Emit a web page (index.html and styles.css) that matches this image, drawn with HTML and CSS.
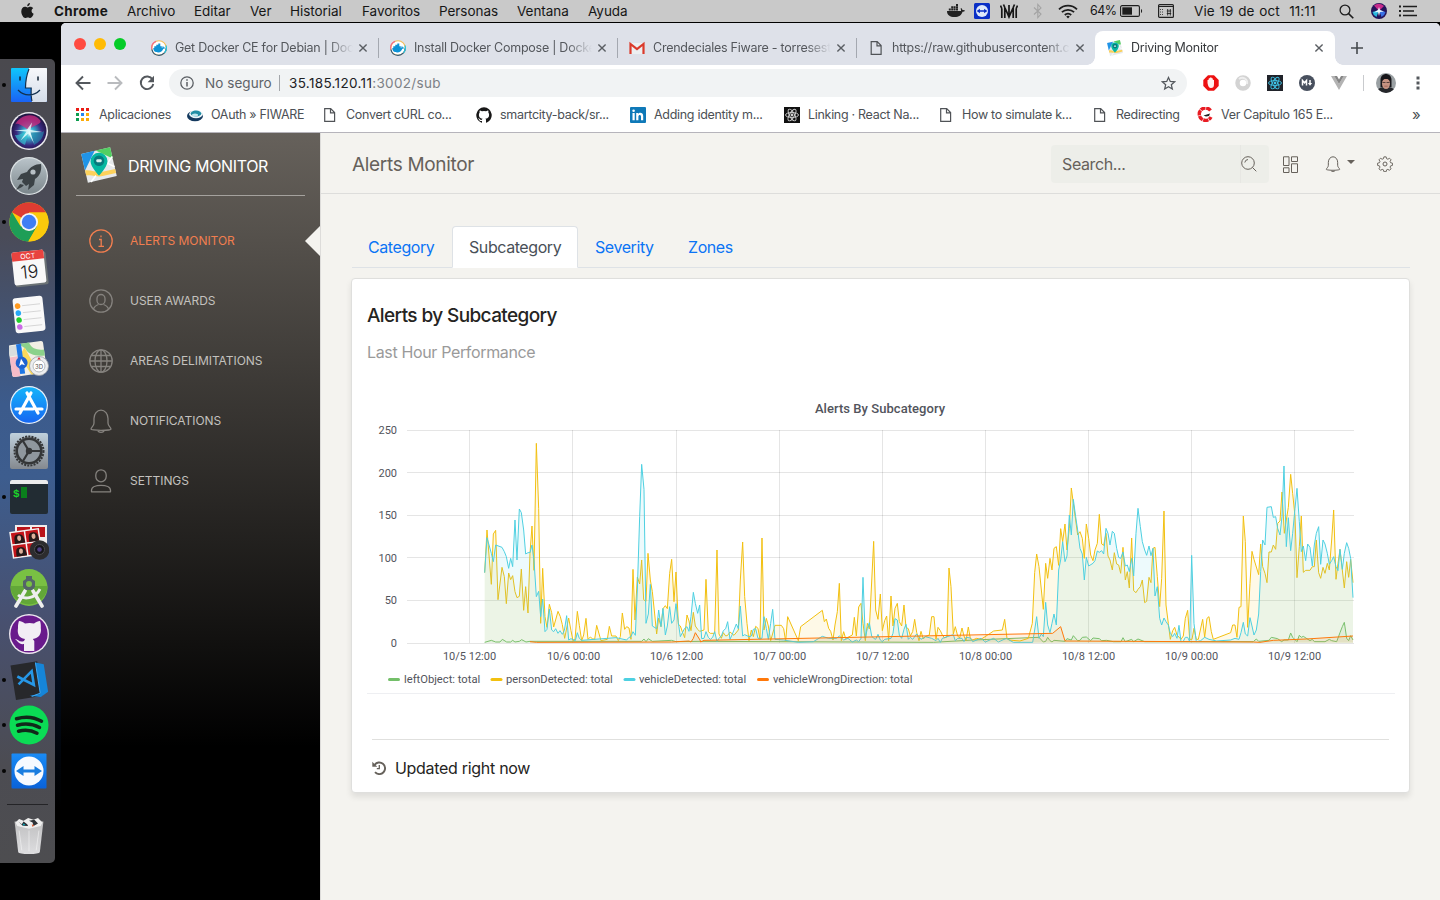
FILE: index.html
```html
<!DOCTYPE html>
<html lang="es">
<head>
<meta charset="utf-8">
<title>Driving Monitor</title>
<link rel="stylesheet" href="styles.css">
</head>
<body>
<svg class="defs" width="0" height="0" aria-hidden="true">
  <defs>
    <linearGradient id="gFinder" x2="0" y2="1"><stop offset="0" stop-color="#0fc6fb"/><stop offset="1" stop-color="#1a62f5"/></linearGradient>
    <linearGradient id="gWhite" x2="0" y2="1"><stop offset="0" stop-color="#f7f8fb"/><stop offset="1" stop-color="#d5dde9"/></linearGradient>
    <linearGradient id="gSilver" x2="0" y2="1"><stop offset="0" stop-color="#b9c3c9"/><stop offset="1" stop-color="#7c878c"/></linearGradient>
    <linearGradient id="gStore" x2="0" y2="1"><stop offset="0" stop-color="#15b4fa"/><stop offset="1" stop-color="#1667f2"/></linearGradient>
    <linearGradient id="gTeam" x2="0" y2="1"><stop offset="0" stop-color="#1a8bf5"/><stop offset="1" stop-color="#0a62d8"/></linearGradient>
    <linearGradient id="gPrefs" x2="0" y2="1"><stop offset="0" stop-color="#bfd0dc"/><stop offset="1" stop-color="#84898f"/></linearGradient>
    <linearGradient id="gTrash" x2="0" y2="1"><stop offset="0" stop-color="#c9c9ca"/><stop offset="1" stop-color="#e8e8ea"/></linearGradient>
    <radialGradient id="gSiri" cx=".5" cy=".55" r=".6"><stop offset="0" stop-color="#eafcff"/><stop offset=".25" stop-color="#36b3cf"/><stop offset=".6" stop-color="#3a2a80"/><stop offset="1" stop-color="#140c28"/></radialGradient>
    <symbol id="docker" viewBox="0 0 16 16">
      <circle cx="8" cy="8" r="7.3" fill="#fff" stroke="#f6bd55" stroke-width="1.1"/>
      <path d="M.9 9.500A7.300 7.300 0 0 1 5 1.400" fill="none" stroke="#f26d86" stroke-width="1.200"/>
      <path d="M15.300 8A7.300 7.300 0 0 1 8 15.300 7.300 7.300 0 0 1 .9 9.500" fill="none" stroke="#27577f" stroke-width="1.200"/>
      <path d="M15 5.500a7.300 7.300 0 0 1-1.500 7.300" fill="none" stroke="#27c5e0" stroke-width="1.200"/>
      <path d="M2.300 8h1V6.300h2V4.700h2V3.600h2v2.700h1.500V8c.8 0 1-.9.7-1.900 1 .3 1.300 1 1.300 1.500.6-.1 1.100 0 1.500.2-.4.8-1.100 1-2 1-.8 2.500-2.500 3.600-5 3.600-3 0-5-1.200-5-4.400z" fill="#0d93d6"/>
    </symbol>
    <symbol id="page" viewBox="0 0 12 16"><path d="M1.200 1.700h6l3.900 3.900v8.700H1.200zM7 1.700v4.100h4.100" fill="none" stroke="#505357" stroke-width="1.200"/></symbol>
    <symbol id="cross" viewBox="0 0 10 10"><path d="M1.400 1.400l7.200 7.200M8.600 1.400L1.400 8.600" stroke="#5a5e63" stroke-width="1.400"/></symbol>
    <symbol id="maplogo" viewBox="0 0 34 34">
      <g transform="rotate(-13 17 17)">
        <rect x="3" y="3" width="28" height="28" fill="#e6e9ec"/>
        <path d="M3 3h13L3 19z" fill="#1f94e8"/><path d="M17 3h14v11z" fill="#53cf62"/>
        <path d="M3 19c7 1 10 5 16 5h12v4H18c-6 0-9-4-15-4z" fill="#fcd15b"/>
        <path d="M20 13l11 9M6 31l6-5M22 20l9-8" stroke="#fff" stroke-width="1.500"/>
      </g>
      <path d="M17 5.500a8 8 0 0 0-8 8c0 5.500 8 13.500 8 13.500s8-8 8-13.500a8 8 0 0 0-8-8z" fill="#06b8a1"/>
      <circle cx="17" cy="13" r="5" fill="#087a7d"/><rect x="14.500" y="11.500" width="5" height="3" rx="1" fill="#d7f1ee"/>
    </symbol>
    <symbol id="react" viewBox="0 0 16 16"><g fill="none" stroke="currentColor" stroke-width=".9"><ellipse cx="8" cy="8" rx="6.500" ry="2.500"/><ellipse cx="8" cy="8" rx="6.500" ry="2.500" transform="rotate(60 8 8)"/><ellipse cx="8" cy="8" rx="6.500" ry="2.500" transform="rotate(120 8 8)"/></g><circle cx="8" cy="8" r="1.400" fill="currentColor"/></symbol>
    <symbol id="bell" viewBox="0 0 24 24"><path d="M2 20.200c0-2 3-3 3-6.200V9.500C5 5 8 1.200 12 1.200S19 5 19 9.500V14c0 3.200 3 4.200 3 6.200 0 .4-4 1.200-10 1.200s-10-.8-10-1.200zM9 21.500c0 1 1.200 1.800 3 1.800s3-.8 3-1.800" fill="none" stroke="currentColor" stroke-linejoin="round"/></symbol>
  </defs>
</svg>

<div class="desktop">
  <header class="menubar">
    <svg class="apple" viewBox="0 0 14 17"><path d="M9.600 0c.1 1.800-1.200 3.400-2.900 3.500C6.500 1.800 8 .2 9.600 0zM7 4.700c.7 0 1.700-.8 3.100-.8 1.200 0 2.300.6 3 1.600-2.500 1.500-2.100 4.900.5 5.900-.6 1.900-2 4.600-3.600 4.600-1 0-1.400-.6-2.700-.6s-1.700.6-2.700.6C2.500 16 .3 12 .3 9 .3 5.900 2.200 4 4.200 4c1.200 0 2.100.7 2.800.7z" fill="#1b1b1b"/></svg>
    <nav class="menu"><b>Chrome</b><span>Archivo</span><span>Editar</span><span>Ver</span><span>Historial</span><span>Favoritos</span><span>Personas</span><span>Ventana</span><span>Ayuda</span></nav>
    <div class="status">
      <svg viewBox="0 0 18 16" width="18" height="16"><path d="M0 8h14c.2-1-.4-2-.2-3 1 .4 1.500 1.200 1.700 2 .9-.2 1.800 0 2.500.4-.5 1-1.400 1.300-2.500 1.300C14.500 12.200 12 14 7.500 14 3 14 0 12.300 0 8zM1.800 5.500h2v2h-2zM4.200 5.500h2v2h-2zM6.600 5.500h2v2h-2zM9 5.500h2v2H9zM4.200 3.200h2v2h-2zM6.600 3.200h2v2h-2zM9 3.200h2v2H9zM9 1h2v1.900H9z" fill="#222"/></svg>
      <svg viewBox="0 0 16 16" width="16" height="16"><rect width="16" height="16" rx="1.500" fill="#0a2fc6"/><circle cx="8" cy="8" r="6" fill="#dfe9fb"/><path d="M2.600 8l3.300-2.300v1.500h4.200V5.700L13.400 8l-3.300 2.300V8.800H5.900v1.500z" fill="#0a2fc6"/></svg>
      <svg viewBox="0 0 18 16" width="18" height="16"><path d="M1.800 15V5.500M4.800 15V4.500M13.200 15V4.500M16.200 15V5.500M4.800 4.500L9 14l4.200-9.500M9 2v12M1.800 5.500L.5 2.500M4.800 4.500L3.500 1.500M13.200 4.500l1.300-3M16.200 5.500l1.300-3" fill="none" stroke="#161616" stroke-width="1.700"/></svg>
      <svg viewBox="0 0 10 16" width="10" height="16"><path d="M1 4.500l7 6.500-3.200 3.500v-13L8 5 1 11.500" fill="none" stroke="#a3a3a3" stroke-width="1.100"/></svg>
      <svg viewBox="0 0 20 15" width="20" height="15"><path d="M1 5.300a13 13 0 0 1 18 0M3.900 8.200a8.900 8.900 0 0 1 12.200 0M6.800 11a4.700 4.700 0 0 1 6.400 0" fill="none" stroke="#1d1d1d" stroke-width="1.800"/><path d="M8.200 12.600L10 14.600l1.800-2a2.600 2.600 0 0 0-3.600 0z" fill="#1d1d1d"/></svg>
      <span class="pct">64%</span>
      <svg viewBox="0 0 23 12" width="23" height="12"><rect x=".6" y=".6" width="18.800" height="10.800" rx="1.500" fill="none" stroke="#1d1d1d" stroke-width="1.100"/><rect x="2.300" y="2.300" width="9.700" height="7.400" fill="#1d1d1d"/><path d="M21 4c1.500.5 1.500 3.500 0 4z" fill="#1d1d1d"/></svg>
      <svg viewBox="0 0 16 14" width="16" height="14"><rect x=".6" y=".6" width="14.800" height="12.800" rx="1" fill="none" stroke="#222" stroke-width="1.200"/><path d="M.6 2.500h14.800" stroke="#222"/><path d="M2 5.500h4M2 8h4M2 10.500h4" stroke="#444" stroke-dasharray="1 1"/><path d="M8.800 7h4.400M8.800 9.500h4.400M9.700 5v6.500M12.300 5v6.500" stroke="#222" stroke-width=".9"/></svg>
      <span class="clock">Vie 19 de oct&nbsp; 11:11</span>
      <svg viewBox="0 0 15 15" width="15" height="15"><circle cx="6" cy="6" r="4.900" fill="none" stroke="#1d1d1d" stroke-width="1.300"/><path d="M9.600 9.600l4.700 4.700" stroke="#1d1d1d" stroke-width="1.600"/></svg>
      <svg viewBox="0 0 16 16" width="16" height="16"><circle cx="8" cy="8" r="8" fill="#23135a"/><path d="M8 8L3 2.500A7 7 0 0 1 13 3z" fill="#c72b8b"/><path d="M8 7L1.500 9a7 7 0 0 0 4 5z" fill="#27b7dd"/><path d="M8 7l6.500 2a7 7 0 0 1-4 5z" fill="#3971e6"/><path d="M8 4l1 3 4 1.500-4 .5-1 4-1-4-4 .5L7 7z" fill="#e9f9ff"/></svg>
      <svg viewBox="0 0 18 12" width="18" height="12"><path d="M4 1.500h14M4 6h11M4 10.500h14" stroke="#1d1d1d" stroke-width="1.600"/><path d="M0 1.500h2M0 6h2M0 10.500h2" stroke="#1d1d1d" stroke-width="1.800"/></svg>
    </div>
  </header>

  <div class="workspace">
    <aside class="dock">
      <div class="app on"><svg viewBox="0 0 40 40"><rect x="2" y="3" width="36" height="34" rx="1" fill="url(#gFinder)"/><path d="M20 3h17a1 1 0 0 1 1 1v32a1 1 0 0 1-1 1H23c-1-4-1-8-.8-14H16.500C16.500 15 18 8 20 3z" fill="url(#gWhite)"/><path d="M11 12v3M29 12v3" stroke="#123" stroke-width="1.500" stroke-linecap="round"/><path d="M9 25c6 6.500 16 6.500 22 0M20 4c-2 5-3.500 11-3.500 19h5.700c-.2 6-.1 10 .8 13" fill="none" stroke="#12304f" stroke-width="1.200"/></svg></div>
      <div class="app"><svg viewBox="0 0 40 40"><circle cx="20" cy="20" r="19" fill="#e8e8ec"/><circle cx="20" cy="20" r="17.500" fill="url(#gSiri)"/><path d="M18 18C10 12 7 12 6 14c4-9 17-14 25-5 3 4-6 5-11 9z" fill="#d02c7e" opacity=".75"/><path d="M20 20c-6 1-10 5-14 4 3 7 8 9 10 10z" fill="#36cbd6" opacity=".65"/><path d="M21 20c7 0 10 3 14 0-1 8-5 11-10 14z" fill="#2385a8" opacity=".7"/><path d="M5 19.500l13-1 5-7-1.500 7.500 12 2-12 .5 3.500 11-5.500-10-8 7 6-9z" fill="#ecffff" opacity=".8"/></svg></div>
      <div class="app"><svg viewBox="0 0 40 40"><circle cx="20" cy="20" r="19" fill="#dce2e4"/><circle cx="20" cy="20" r="17.800" fill="url(#gSilver)"/><path d="M32 8c-6 0-11 3-14 8l-6 2-4 6 6-1-1 3 4 4 3-2-1 6 6-5 1-6c5-3 7-9 6-15zM11 28l-4 6 6-3 2-2z" fill="#3b4246"/><circle cx="24" cy="16" r="2.600" fill="#b7c0c5"/></svg></div>
      <div class="app on"><svg viewBox="0 0 40 40"><circle cx="20" cy="20" r="19.600" fill="#fbca0c"/><path d="M20 20L3 10.300A19.600 19.600 0 0 1 37 10.500H20z" fill="#de3c31"/><path d="M3 10.300A19.600 19.600 0 0 0 19.300 39.600L28 24.500 20 20 11.700 24.500z" fill="#1e9e57"/><path d="M37 10.500H20v9l8 5-8.700 15.100A19.600 19.600 0 0 0 37 10.500z" fill="#fbca0c"/><circle cx="20" cy="20" r="9" fill="#f5f5f5"/><circle cx="20" cy="20" r="7.200" fill="#3f7ef4"/></svg></div>
      <div class="app"><svg viewBox="0 0 40 40"><g transform="rotate(-6 20 20)"><rect x="5" y="5" width="33" height="33" rx="2" fill="#6c7376"/><rect x="4" y="3" width="32" height="33" rx="2" fill="#f8f8f8"/><path d="M4 12V5q0-2 2-2h28q2 0 2 2v7z" fill="#e8433f"/><text x="20" y="10.500" class="cal-month">OCT</text><text x="20" y="30" class="cal-day">19</text></g></svg></div>
      <div class="app"><svg viewBox="0 0 40 40"><g transform="rotate(-6 20 20)"><rect x="5" y="3" width="30" height="35" rx="3" fill="#f9f9f9"/><path d="M14 11h18M14 18h18M14 25h18M14 32h18" stroke="#cfcfcf" stroke-width=".8"/><circle cx="9.500" cy="11" r="2.800" fill="#ff9a1f"/><circle cx="9.500" cy="18" r="2.800" fill="#27a9f6"/><circle cx="9.500" cy="25" r="2.800" fill="#22ce2b"/><circle cx="9.500" cy="32" r="2.800" fill="#cb6be6"/></g></svg></div>
      <div class="app"><svg viewBox="0 0 40 40"><g transform="rotate(-8 18 19)"><rect x="1" y="4" width="35" height="32" rx="2" fill="#f2efe5"/><path d="M12 4h10c2 7 8 9 14 9v6c-9 0-17-4-18-9z" fill="#8bd18b"/><path d="M1 5h8v10H1z" fill="#d9dede"/><path d="M1 16l8 0v20H3q-2 0-2-2z" fill="#f6bcc8"/><path d="M22 21l8 15H20l-9-20 6-8z" fill="#fbd95a"/><path d="M9 4h5v30H9z" fill="#1e78e6"/><circle cx="12" cy="23" r="6" fill="#1e63d0"/><path d="M12 19l3 7-3-1.500L9 26z" fill="#fff"/></g><circle cx="30" cy="27" r="9.500" fill="#eceef0" stroke="#9aa0a5" stroke-width=".8"/><circle cx="30" cy="27" r="6" fill="#fff" stroke="#b6bcc0"/><text x="30" y="29.500" class="map-3d">3D</text><path d="M30 18l1.700 2.600h-3.400z" fill="#d9272e"/></svg></div>
      <div class="app"><svg viewBox="0 0 40 40"><circle cx="20" cy="20" r="19" fill="#e9f2fb"/><circle cx="20" cy="20" r="17.800" fill="url(#gStore)"/><path d="M22 8L11 28M18 8l11 20M7 24h17M28.500 24H33" stroke="#fff" stroke-width="3.200" stroke-linecap="round"/></svg></div>
      <div class="app"><svg viewBox="0 0 40 40"><rect x="1" y="2" width="38" height="36" rx="2" fill="url(#gPrefs)"/><circle cx="20" cy="20" r="14.500" fill="#8f979d" stroke="#343637" stroke-width="2" stroke-dasharray="2 1.200"/><circle cx="20" cy="20" r="12.300" fill="none" stroke="#343637" stroke-width="2.600"/><path d="M20 20h11M20 20l-6-10M20 20l-6 10" stroke="#343637" stroke-width="2.200"/><circle cx="20" cy="20" r="3.200" fill="#343637"/></svg></div>
      <div class="app on"><svg viewBox="0 0 40 40"><rect x="1" y="3" width="38" height="34" rx="2" fill="#222c33"/><path d="M1 7V5q0-2 2-2h34q2 0 2 2v2z" fill="#ececec"/><text x="4" y="19.500" class="term">$</text><rect x="12" y="10" width="6" height="11" fill="#0a7f1c"/></svg></div>
      <div class="app"><svg viewBox="0 0 40 40"><path d="M6 3h32v24H6z" fill="#f0eded"/><path d="M8 5h13v10H8zM23 5h13v10H23z" fill="#ba1319"/><g transform="rotate(-8 16 22)"><path d="M2 8h30v27H2z" fill="#f4f1f1"/><path d="M3.500 9.500h13v11h-13zM18 9.500h12.500v11H18zM3.500 22h13v11.500h-13zM18 22h12.500v11.500H18z" fill="#c3151b"/><path d="M6 20.500c0-8 1-9 5-9s5 3 5.500 9zM20.500 20.500c0-8 1-9 5-9s5 3 5 9zM6 33.500c0-8 1-9 5-9s5 3 5.500 9z" fill="#25191a"/><ellipse cx="11" cy="15.500" rx="2" ry="2.700" fill="#deb09b"/><ellipse cx="25.500" cy="15.500" rx="2" ry="2.700" fill="#deb09b"/><ellipse cx="11" cy="28.500" rx="2" ry="2.700" fill="#deb09b"/></g><circle cx="30.500" cy="28" r="9.800" fill="#2c2c2e"/><circle cx="30.500" cy="27.500" r="5" fill="#151519" stroke="#4c4c50"/><circle cx="30.500" cy="27.500" r="2.300" fill="#503f87"/></svg></div>
      <div class="app"><svg viewBox="0 0 40 40"><circle cx="20" cy="19.500" r="18.500" fill="#79c043"/><path d="M1.500 18a18.500 18.500 0 0 0 37 0z" fill="#62a738"/><path d="M16 23L7 38M24 23l9 15" stroke="#eee" stroke-width="3.600" stroke-linecap="round"/><path d="M9 27c6 5 17 4 22-6" fill="none" stroke="#eee" stroke-width="2.800"/><path d="M17 8h6v3l3 2v6l-3 3h-6l-3-3v-6l3-2z" fill="#546469"/><circle cx="20" cy="16" r="3" fill="#79c043"/></svg></div>
      <div class="app"><svg viewBox="0 0 40 40"><circle cx="20" cy="20" r="20" fill="#eee7f0"/><circle cx="20" cy="20" r="18.600" fill="#691a8c"/><path d="M15 37v-7c-5 1-7-4-9-5 3-.5 4 4 9 2l1-2c-6-1-8-5-7-11-.1-3 .3-5 1-7 2 0 4 1 6 2.500 3-.8 6-.8 9 0C27 8 29 7 31 7c.7 2 1 4 .8 7 1 6-2 10-8 11l1.500 2v10z" fill="#f2edf4"/></svg></div>
      <div class="app on"><svg viewBox="0 0 40 40"><g transform="rotate(-9 18 20)"><path d="M4 3h27v35H4z" fill="#27282b"/><path d="M29 4l8 3v28l-8 4-11-3 11 0z" fill="#1685d8"/><path d="M29 4v31l-9 2" fill="none" stroke="#3ea8f4"/><path d="M9 15l15 11V12L9 23" fill="none" stroke="#2797e6" stroke-width="2.600"/></g></svg></div>
      <div class="app on"><svg viewBox="0 0 40 40"><circle cx="20" cy="20" r="19.500" fill="#0bdc55"/><path d="M7.500 13.700c8.500-2.500 18-1.500 25 2.500M8.500 20.200c7.500-2 15.500-1.200 22 2.300M9.500 26.200c6.500-1.500 13-1 18.500 2" fill="none" stroke="#11291a" stroke-width="3.500" stroke-linecap="round"/></svg></div>
      <div class="app on"><svg viewBox="0 0 40 40"><rect x="2.500" y="2.500" width="35" height="35" rx="1" fill="url(#gTeam)"/><circle cx="20" cy="20" r="14.500" fill="#f7faff"/><path d="M7 20l7.500-5v3.500h11V15l7.500 5-7.500 5v-3.500h-11V25z" fill="#197de0"/></svg></div>
      <hr class="dock-line">
      <div class="app trash"><svg viewBox="0 0 40 42"><path d="M4 5h32l-4 34q-1 2-12 2T8 39z" fill="url(#gTrash)" opacity=".93"/><path d="M5 6l4-4 5 2 5-3 6 2 5-2 5 5-2 4-13 3L7 10z" fill="#eee"/><path d="M8 5l4 3 2-3 4 3 1 2-6-.5zM20 4l4 2 1 4 5-3-4-4z" fill="#2c3136"/><path d="M13 7l3 1-2 2z" fill="#08a7b7"/><path d="M23 8l3 1-2 2z" fill="#d05730"/><path d="M9 15l3 22M20 15v23M31 15l-3 22" stroke="#fff" opacity=".5"/></svg></div>
    </aside>

    <main class="window">
      <div class="tabstrip">
        <div class="lights"><i class="red"></i><i class="amber"></i><i class="green"></i></div>
        <div class="tab"><svg class="fav"><use href="#docker"/></svg><span>Get Docker CE for Debian | Doc</span><svg class="x"><use href="#cross"/></svg></div>
        <div class="tab"><svg class="fav"><use href="#docker"/></svg><span>Install Docker Compose | Docke</span><svg class="x"><use href="#cross"/></svg></div>
        <div class="tab"><svg class="fav" viewBox="0 0 16 16"><path d="M1 3h14v11H1z" fill="#eceff1"/><path d="M1.500 14V4L8 9l6.500-5v10" fill="none" stroke="#db3a2b" stroke-width="2.200"/></svg><span>Crendeciales Fiware - torresest</span><svg class="x"><use href="#cross"/></svg></div>
        <div class="tab last"><svg class="fav"><use href="#page"/></svg><span>https://raw.githubusercontent.c</span><svg class="x"><use href="#cross"/></svg></div>
        <div class="tab current"><svg class="fav"><use href="#maplogo"/></svg><span>Driving Monitor</span><svg class="x"><use href="#cross"/></svg></div>
        <svg class="plus" viewBox="0 0 12 12"><path d="M6 0v12M0 6h12" stroke="#45494d" stroke-width="1.600"/></svg>
      </div>
      <div class="toolbar">
        <svg class="nav" viewBox="0 0 16 16"><path d="M15.500 8H2M8 1.500L1.500 8 8 14.500" fill="none" stroke="#54585d" stroke-width="1.900"/></svg>
        <svg class="nav" viewBox="0 0 16 16"><path d="M.5 8H14M8 1.500L14.500 8 8 14.500" fill="none" stroke="#b9bbbe" stroke-width="1.900"/></svg>
        <svg class="nav" viewBox="0 0 16 16"><path d="M13.500 4.500A6.300 6.300 0 1 0 14.300 9" fill="none" stroke="#54585d" stroke-width="1.900"/><path d="M15 .8v6.400H8.600z" fill="#54585d"/></svg>
        <div class="omnibox">
          <svg viewBox="0 0 14 14" width="14" height="14"><circle cx="7" cy="7" r="6.200" fill="none" stroke="#5a5e63" stroke-width="1.300"/><path d="M7 6v4.500M7 3.300v1.500" stroke="#5a5e63" stroke-width="1.500"/></svg>
          <span class="insecure">No seguro</span>
          <span class="url"><b>35.185.120.11</b>:3002/sub</span>
          <svg class="star" viewBox="0 0 16 16" width="15" height="15"><path d="M8 1.500l1.900 4.300 4.700.4-3.600 3.100 1.100 4.600L8 11.500l-4.100 2.400L5 9.300 1.400 6.200l4.700-.4z" fill="none" stroke="#54585d" stroke-width="1.300"/></svg>
        </div>
        <div class="ext">
          <svg viewBox="0 0 16 16"><path d="M5 .3h6L15.700 5v6L11 15.700H5L.3 11V5z" fill="#ed1111"/><path d="M4.500 8V5l1.200-.2V3.500L7 3v-.5h1.500V3l1.300.4v1.400L11 5v4c0 3-1 4-3 4S5 11 4.500 8z" fill="#fff1ef"/></svg>
          <svg viewBox="0 0 16 16"><circle cx="8" cy="8" r="5.500" fill="none" stroke="#d3d3d3" stroke-width="4.500"/><path d="M4 4c4-3 9 0 8 5" stroke="#eee" stroke-width="2" fill="none"/></svg>
          <svg viewBox="0 0 16 16" class="react-ext"><rect width="16" height="16" fill="#20232a"/><use href="#react" width="16" height="16"/></svg>
          <svg viewBox="0 0 16 16"><circle cx="8" cy="8" r="8" fill="#48505e"/><path d="M3.500 10.500v-5l2 2.300 2-2.300v5M11 5v3.500" fill="none" stroke="#fff" stroke-width="1.500"/><path d="M8.800 8h4.400L11 10.800z" fill="#fff"/></svg>
          <svg viewBox="0 0 16 16"><path d="M0 1h3.500L8 9l4.500-8H16L8 15z" fill="#b3b3b3"/><path d="M3.300 1H6l2 3.500L10 1h2.700L8 9z" fill="#868686"/></svg>
        </div>
        <svg class="avatar" viewBox="0 0 20 20"><clipPath id="face"><circle cx="10" cy="10" r="10"/></clipPath><g clip-path="url(#face)"><rect width="20" height="20" fill="#9aa0a3"/><path d="M0 20c1-5 5-6 10-6s9 1 10 6z" fill="#26272b"/><path d="M4.500 14V7c0-8 11-8 11 0v7z" fill="#17161a"/><ellipse cx="10" cy="10.500" rx="4" ry="5.500" fill="#c79382"/><path d="M5.500 8c1-3 3-4 4.500-4s3.500 1 4.500 4l-3-2-3 0z" fill="#17161a"/><path d="M6.500 9.500h3M10.500 9.500h3" stroke="#3a2a28" stroke-width=".8"/><path d="M8.300 13.200h3.400" stroke="#9c5f55" stroke-width=".8"/></g></svg>
        <svg class="kebab" viewBox="0 0 4 14"><path d="M.5.500h3v3h-3zM.5 5.500h3v3h-3zM.5 10.500h3v3h-3z" fill="#54585d"/></svg>
      </div>
      <div class="bookmarks">
        <div class="bm"><svg viewBox="0 0 13 13" width="13" height="13"><path d="M0 0h3v3H0zM5 0h3v3H5zM10 0h3v3h-3z" fill="#e91b14"/><path d="M0 5h3v3H0zM0 10h3v3H0z" fill="#0c9d4f"/><path d="M5 5h3v3H5z" fill="#2386f2"/><path d="M10 5h3v3h-3zM5 10h3v3H5zM10 10h3v3h-3z" fill="#fcab08"/></svg><span>Aplicaciones</span></div>
        <div class="bm"><svg viewBox="0 0 16 16" width="16" height="16"><ellipse cx="8" cy="9" rx="8" ry="5.300" fill="#14395e"/><ellipse cx="9" cy="7.200" rx="6.800" ry="4" fill="#eaf4f8"/><ellipse cx="9" cy="6.500" rx="5.300" ry="3" fill="#218ea5"/><ellipse cx="8" cy="8" rx="3" ry="1.500" fill="#bfe5ee"/></svg><span>OAuth » FIWARE</span></div>
        <div class="bm"><svg width="13" height="16"><use href="#page"/></svg><span>Convert cURL co...</span></div>
        <div class="bm"><svg viewBox="0 0 16 16" width="16" height="16"><path d="M8 .2a8 8 0 0 0-2.500 15.500c.4.100.5-.2.500-.4v-1.400c-2.200.5-2.700-1-2.700-1-.4-.9-.9-1.200-.9-1.200-.7-.5.100-.5.100-.5.800.1 1.200.8 1.200.8.700 1.200 1.900.9 2.300.7.100-.5.300-.9.500-1.100-1.800-.2-3.600-.9-3.600-3.900 0-.9.300-1.600.8-2.100-.1-.2-.4-1 .1-2.100 0 0 .7-.2 2.200.8a7.600 7.600 0 0 1 4 0c1.500-1 2.200-.8 2.200-.8.400 1.100.2 1.900.1 2.100.5.600.8 1.300.8 2.100 0 3.100-1.900 3.700-3.700 3.900.3.300.6.800.6 1.500v2.200c0 .2.100.5.500.4A8 8 0 0 0 8 .2z" fill="#181717"/></svg><span>smartcity-back/sr...</span></div>
        <div class="bm"><svg viewBox="0 0 16 16" width="16" height="16"><rect width="16" height="16" rx="1" fill="#0f79b8"/><path d="M2.500 6h2.200v7.200H2.500zM6.200 6h2v1c1-1.800 5-1.800 5 2v4.200H11V9.600c0-2.300-2.600-2-2.600 0v3.600H6.200z" fill="#fff"/><circle cx="3.600" cy="3.700" r="1.300" fill="#fff"/></svg><span>Adding identity m...</span></div>
        <div class="bm"><svg viewBox="0 0 16 16" width="16" height="16" class="react-bm"><rect width="16" height="16" fill="#101010"/><use href="#react" width="16" height="16"/></svg><span>Linking · React Na...</span></div>
        <div class="bm"><svg width="13" height="16"><use href="#page"/></svg><span>How to simulate k...</span></div>
        <div class="bm"><svg width="13" height="16"><use href="#page"/></svg><span>Redirecting</span></div>
        <div class="bm"><svg viewBox="0 0 16 16" width="16" height="16"><path d="M13.500 3.500A6.200 6.200 0 1 0 14 10" fill="none" stroke="#e81c23" stroke-width="3.400" stroke-dasharray="5 .6"/><path d="M6.500 8.500L13 6.500l-1 2.500-3 .5z" fill="#222"/></svg><span>Ver Capitulo 165 E...</span></div>
        <span class="more">»</span>
      </div>

      <div class="page">
        <aside class="sidebar">
          <div class="brand"><svg width="36" height="36"><use href="#maplogo"/></svg><span>DRIVING MONITOR</span></div>
          <ul class="links">
            <li class="active"><svg viewBox="0 0 24 24"><g fill="none" stroke="currentColor"><circle cx="12" cy="12" r="11.200"/><path d="M10 10.500h2.200V17M9.500 17.300h5.500M12 6.500v1.800"/></g></svg><span>ALERTS MONITOR</span></li>
            <li><svg viewBox="0 0 24 24"><g fill="none" stroke="currentColor"><circle cx="12" cy="12" r="11.200"/><rect x="8" y="5.500" width="8" height="10" rx="4"/><path d="M4.500 20c.5-2 2.500-3.500 5-4.500M19.500 20c-.5-2-2.500-3.500-5-4.500"/></g></svg><span>USER AWARDS</span></li>
            <li><svg viewBox="0 0 24 24"><g fill="none" stroke="currentColor"><circle cx="12" cy="12" r="11.200"/><ellipse cx="12" cy="12" rx="6" ry="11.200"/><path d="M12 .8v22.400M.8 12h22.400M2.800 6.500h18.400M2.800 17.500h18.400"/></g></svg><span>AREAS DELIMITATIONS</span></li>
            <li><svg><use href="#bell"/></svg><span>NOTIFICATIONS</span></li>
            <li><svg viewBox="0 0 24 24"><g fill="none" stroke="currentColor"><rect x="6.800" y=".8" width="10.400" height="12" rx="5.200"/><path d="M2.500 22.800v-1.500c0-3.300 4.500-5 9.500-5s9.500 1.700 9.500 5v1.500z" stroke-linejoin="round"/></g></svg><span>SETTINGS</span></li>
          </ul>
        </aside>

        <section class="content">
          <div class="topbar">
            <h1>Alerts Monitor</h1>
            <div class="search"><span>Search...</span><i><svg viewBox="0 0 16 16" width="16" height="16"><circle cx="7" cy="7" r="6.300" fill="none" stroke="#66615b"/><path d="M11.500 11.500l3.800 3.800M3.800 6.500A3.500 3.500 0 0 1 7 3.500" stroke="#66615b" fill="none"/></svg></i></div>
            <svg class="tiles" viewBox="0 0 15 17"><path d="M.5.800h5.500v8.700H.5zM8.500.800h6v4.700h-6zM.5 11.800h5.500v4.700H.5zM8.500 7.800h6v8.700h-6z" fill="none" stroke="#66615b"/></svg>
            <svg class="alarm"><use href="#bell"/></svg>
            <i class="caret"></i>
            <svg class="gear" viewBox="0 0 16 16"><path d="M6.800.6h2.400l.5 2 1.300.5 1.800-1 1.600 1.600-1 1.800.5 1.300 2 .5v2.400l-2 .5-.5 1.300 1 1.800-1.600 1.600-1.800-1-1.300.5-.5 2H6.800l-.5-2-1.300-.5-1.800 1-1.600-1.600 1-1.800-.5-1.300-2-.5V7.300l2-.5.5-1.300-1-1.800L3.200 2.100l1.800 1 1.300-.5z" transform="translate(.5 .3) scale(.94)" fill="none" stroke="#66615b" stroke-linejoin="round"/><circle cx="8" cy="8" r="2" fill="none" stroke="#66615b"/></svg>
          </div>
          <div class="tabs"><a>Category</a><a class="active">Subcategory</a><a>Severity</a><a>Zones</a></div>
          <article class="card">
            <h2>Alerts by Subcategory</h2>
            <p class="sub">Last Hour Performance</p>
            <svg class="chart" viewBox="367 390 1028 303" id="chart">
              <text x="880" y="413" class="chart-title">Alerts By Subcategory</text>
              <path class="grid" d="M407 430.500h947M407 472.500h947M407 515.500h947M407 557.500h947M407 600.500h947M407 643.500h947M469.500 430v213M572.500 430v213M676.500 430v213M779.500 430v213M882.500 430v213M985.500 430v213M1088.500 430v213M1191.500 430v213M1294.500 430v213"/>
              <g id="series" transform="translate(360 390) scale(.33333)"></g>
              <g class="axis-y"><text x="397" y="434">250</text><text x="397" y="477">200</text><text x="397" y="519">150</text><text x="397" y="562">100</text><text x="397" y="604">50</text><text x="397" y="647">0</text></g>
              <g class="axis-x"><text x="469.500" y="660">10/5 12:00</text><text x="573.500" y="660">10/6 00:00</text><text x="676.500" y="660">10/6 12:00</text><text x="779.500" y="660">10/7 00:00</text><text x="882.500" y="660">10/7 12:00</text><text x="985.500" y="660">10/8 00:00</text><text x="1088.500" y="660">10/8 12:00</text><text x="1191.500" y="660">10/9 00:00</text><text x="1294.500" y="660">10/9 12:00</text></g>
              <g class="keys"><path d="M389.500 679.500h9" stroke="#73bf69"/><path d="M492 679.500h9" stroke="#f2c010"/><path d="M625 679.500h9" stroke="#4dd0e1"/><path d="M758.500 679.500h9" stroke="#ff780a"/></g>
              <g class="legend"><text x="404" y="683">leftObject: total</text><text x="506" y="683">personDetected: total</text><text x="639" y="683">vehicleDetected: total</text><text x="773" y="683">vehicleWrongDirection: total</text></g>
            </svg>
            <footer><svg viewBox="0 0 14 14" width="14" height="14"><path d="M2.500 4A5.800 5.800 0 1 1 3 11.200" fill="none" stroke="#66615b" stroke-width="1.900"/><path d="M.3.800v5h5z" fill="#66615b"/><path d="M7.300 4v3.600H4.800" fill="none" stroke="#66615b" stroke-width="1.300"/></svg><span>Updated right now</span></footer>
          </article>
        </section>
      </div>
    </main>
  </div>
</div>
<script src="chart.js"></script>
</body>
</html>
```
FILE: styles.css
```css
* { box-sizing: border-box; }
body { margin: 0; overflow: hidden; font-family: Inter, "Liberation Sans", sans-serif; }
h1, h2, p, ul, hr { margin: 0; padding: 0; }
svg { display: block; flex: none; }
.defs { position: absolute; }

.desktop { width: 1440px; height: 900px; display: flex; flex-direction: column; background: linear-gradient(#000 12%, #06244d 45%, #051733 62%, #000 90%); }

/* system menu bar */
.menubar { height: 23px; flex: none; display: flex; align-items: center; justify-content: space-between; background: #c9c9c9; border-bottom: 1px solid #000; color: #161616; font-size: 13.500px; line-height: 22px; white-space: nowrap; }
.apple { width: 13px; height: 16px; margin-left: 21px; }
.menu { display: grid; grid-template-columns: 73px 67px 56px 40px 72px 77px 78px 71px 50px; margin-left: 20px; margin-right: auto; letter-spacing: -.05px; }
.menu b { letter-spacing: .3px; }
.status { display: grid; grid-template-columns: 27px 26px 33px 25px 32px 30px 38px 36px 145px 32px 28px 41px; align-items: center; }
.pct { font-size: 12.500px; letter-spacing: -.5px; }
.clock { letter-spacing: .1px; word-spacing: .8px; }

.workspace { flex: 1; display: flex; min-height: 0; }

/* dock */
.dock { width: 55px; height: 804px; margin: 36px 6px 0 0; padding-top: 3px; flex: none; border-radius: 0 5px 5px 0; background: linear-gradient(#4a494e 0, #4a4b58 22%, #3c5b8c 43%, #3d5d8e 52%, #48506f 70%, #4c4c52 88%, #4d4d50); }
.app { height: 45.750px; display: flex; align-items: center; padding-left: 2px; }
.app::before { content: ""; width: 4px; height: 4px; margin-right: 3px; border-radius: 50%; }
.app.on::before { background: #050505; }
.app svg { width: 40px; height: 40px; }
.dock-line { border: 0; height: 1px; margin: 10px 7px 8px; background: #242427; }
.app.trash svg { width: 36px; height: 42px; margin-left: 2px; }
.cal-month { font-size: 7px; fill: #fff; text-anchor: middle; }
.cal-day { font-size: 18px; font-weight: 300; fill: #1d1d1d; text-anchor: middle; }
.map-3d { font-size: 6px; fill: #555; text-anchor: middle; }
.term { font: bold 11px "Liberation Mono", monospace; fill: #1cd42a; }

/* browser chrome */
.window { flex: 1; display: flex; flex-direction: column; min-width: 0; border-radius: 5px 5px 0 0; overflow: hidden; background: #fff; }
.tabstrip { height: 42px; flex: none; display: flex; padding: 8px 0 0 13px; background: #dee1e9; }
.lights { width: 68px; display: flex; gap: 8px; padding-top: 7px; }
.lights i { width: 12px; height: 12px; border-radius: 50%; }
.red { background: #ff4b41; }
.amber { background: #ffbb05; }
.green { background: #05cc28; }
.tab { width: 239px; height: 34px; display: flex; align-items: center; padding-left: 9px; position: relative; color: #54575c; font-size: 12.500px; letter-spacing: -.25px; }
.tab .fav { width: 16px; height: 16px; margin-right: 8px; }
.tab span { width: 178px; white-space: nowrap; line-height: 18px; -webkit-mask-image: linear-gradient(90deg, #000 153px, transparent 178px); mask-image: linear-gradient(90deg, #000 153px, transparent 178px); }
.tab .x { width: 10px; height: 10px; margin-left: 5px; }
.tab:not(.current):not(.last)::after { content: ""; width: 1px; height: 20px; margin-left: 10px; background: #a4a8b0; }
.tab.last { width: 236px; }
.tab.current { width: 240px; padding-left: 12px; background: #fff; border-radius: 8px 8px 0 0; color: #35383b; }
.tab.current::before, .tab.current::after { content: ""; position: absolute; bottom: 0; width: 8px; height: 8px; }
.tab.current::before { left: -8px; background: radial-gradient(circle at 0 0, transparent 7.500px, #fff 8px); }
.tab.current::after { right: -8px; background: radial-gradient(circle at 100% 0, transparent 7.500px, #fff 8px); }
.plus { width: 12px; height: 12px; margin: 11px 0 0 16px; }

.toolbar { height: 36px; flex: none; display: flex; align-items: center; padding-left: 14px; }
.nav { width: 16px; height: 16px; margin-right: 16px; }
.omnibox { width: 1018px; height: 28px; margin-left: -2px; padding: 0 11px; display: flex; align-items: center; border-radius: 14px; background: #f1f3f4; font-size: 13.500px; white-space: nowrap; }
.insecure { width: 75px; margin-left: 11px; color: #5f6368; border-right: 1px solid #a3a6aa; line-height: 16px; letter-spacing: .05px; }
.url { margin-left: 9px; color: #7d8186; letter-spacing: .33px; }
.url b { font-weight: 400; color: #202124; }
.star { margin-left: auto; }
.ext { display: flex; gap: 16px; margin-left: 16px; padding-right: 16px; border-right: 1px solid #c9cbce; }
.ext svg { width: 16px; height: 16px; }
.react-ext { color: #3fc5e8; }
.react-bm { color: #d0d0d0; }
.avatar { width: 20px; height: 20px; margin-left: 12px; }
.kebab { width: 4px; height: 14px; margin-left: 20px; }

.bookmarks { height: 32px; flex: none; display: grid; grid-template-columns: 111px 136px 153px 154px 154px 155px 154px 104px 215px 20px; align-items: center; padding: 0 0 4px 15px; border-bottom: 1px solid #b6b4bb; color: #4c5055; font-size: 12.500px; letter-spacing: -.3px; white-space: nowrap; }
.bm { display: flex; align-items: center; }
.bm span { margin-left: 8px; }
.bm:first-child span, .bm:nth-child(3) span, .bm:nth-child(7) span, .bm:nth-child(8) span { margin-left: 10px; }
.more { font-size: 15px; }

/* dashboard */
.page { flex: 1; display: flex; min-height: 0; background: #f4f3ef; }
.sidebar { width: 259px; flex: none; padding: 0 15px; position: relative; background: linear-gradient(#66615b, #000 80%); }
.brand { height: 63px; display: flex; align-items: center; padding: 2px 0 0 5px; border-bottom: 1px solid #a5a29e; color: #fff; font-size: 16px; letter-spacing: -.36px; }
.brand span { margin: 1px 0 0 11px; }
.links { list-style: none; padding-top: 15px; }
.links li { height: 60px; display: flex; align-items: center; padding-left: 13px; color: #85827e; font-size: 12px; letter-spacing: -.05px; }
.links svg { width: 24px; height: 24px; margin-right: 17px; stroke-width: 1.300; }
.links span { margin-top: -2px; color: #c3c1be; }
.links .active, .links .active span { color: #f17e4f; }
.links .active::after { content: ""; position: absolute; right: 0; border: 15px solid transparent; border-left: 0; border-right-color: #f4f3ef; }

.content { flex: 1; min-width: 0; border-left: 1px solid #dddcda; display: flex; flex-direction: column; }
.topbar { height: 61px; flex: none; display: flex; align-items: center; padding: 2px 0 0 31px; border-bottom: 1px solid #dddddb; color: #66615b; }
.topbar h1 { font-size: 19px; font-weight: 400; letter-spacing: -.32px; width: 699px; }
.search { width: 218px; height: 38px; display: flex; background: #edeee9; border-radius: 4px; font-size: 16px; line-height: 38px; letter-spacing: -.38px; }
.search span { width: 190px; padding-left: 11px; border-right: 1px solid #e7e7e3; }
.search i { padding-top: 11px; }
.tiles { width: 15px; height: 17px; margin-left: 14px; }
.alarm { width: 16px; height: 16px; margin-left: 27px; stroke-width: 1.500; }
.caret { margin: -4px 0 0 6px; border: 4px solid transparent; border-top-color: #66615b; border-bottom: 0; }
.gear { width: 16px; height: 16px; margin-left: 22px; }

.tabs { height: 42px; flex: none; display: flex; margin: 32px 30px 0 31px; border-bottom: 1px solid #dee2e6; font-size: 16px; line-height: 24px; letter-spacing: -.42px; }
.tabs a { height: 42px; padding: 8px 15px 0 16px; border: 1px solid transparent; color: #0b74f5; }
.tabs a:nth-child(1) { width: 100px; padding-left: 15px; }
.tabs a:nth-child(2) { width: 126px; }
.tabs a:nth-child(3) { width: 93px; }
.tabs .active { background: #fff; border-color: #dee2e6 #dee2e6 #fff; border-radius: 4px 4px 0 0; color: #495057; }

.card { height: 515px; flex: none; margin: 10px 30px 0; display: flex; flex-direction: column; background: #fff; border: 1px solid #dfdfdd; border-radius: 4px; box-shadow: 0 4px 6px rgba(0, 0, 0, .09); color: #252422; }
.card h2 { margin: 25px 0 0 15px; font-size: 19px; font-weight: 500; line-height: 24px; letter-spacing: -.61px; }
.card .sub { margin: 12px 0 0 15px; font-size: 16px; line-height: 24px; letter-spacing: -.35px; color: #9a9a9a; }
.chart { width: 1028px; height: 304px; margin: 26px 0 0 15px; border-bottom: 1px solid #eeeff2; }
.card footer { margin: 45px 20px 0; height: 52px; display: flex; align-items: center; gap: 9px; padding-top: 5px; border-top: 1px solid #e0e0de; font-size: 16px; letter-spacing: -.3px; }

.chart text { font-family: Roboto, sans-serif; fill: #52545c; }
.chart .chart-title { font-size: 13px; font-weight: 500; letter-spacing: .05px; text-anchor: middle; }
.axis-x text { font-size: 11px; text-anchor: middle; }
.axis-y text { font-size: 11px; text-anchor: end; }
.legend text { font-size: 11.200px; }
.keys path { stroke-width: 3; stroke-linecap: round; }
.grid { stroke: #000; stroke-opacity: .1; fill: none; }
.line { fill: none; stroke-width: 3; stroke-linejoin: round; }
.area { fill-opacity: .1; stroke: none; }
```
FILE: chart.js
```js
// Each series is split in blocks: [x offset, "x,y x,y ..."], in thirds of a pixel.
const BASE = 758;
const series = [
  { color: "#73bf69", blocks: [
    [0, "374,757 394,751 407,756 420,756 427,748 440,756 452,756 458,751 465,756 478,754 485,749 498,756 510,754 845,754 852,747 858,755 865,746 877,754 935,751 948,755 1020,754"],
    [990, "730,757 850,750 1020,743"],
    [1980, "57,742 70,756 77,754 83,742 90,752 96,756 102,751 135,754 141,746 154,750 160,737 173,752 180,751 187,742 199,741 212,752 219,744 238,746 245,752 260,751 280,755 303,755 309,743 316,755 335,748 341,755 354,747 374,755 700,755 709,747 716,754 747,751 754,742 773,746 785,755 792,750 805,750 812,729 818,742 831,755 838,736 844,742 850,739 870,752 877,748 883,755 915,755 928,748 935,752 950,755 960,728 967,710 973,697 980,745 986,752 992,737 999,750"]
  ] },
  { color: "#f2c010", blocks: [
    [0, "374,548 381,420 394,583 400,432 407,421 414,629 426,532 433,560 439,641 446,549 452,569 458,557 465,605 471,623 478,619 484,537 491,661 497,590 504,669 510,490 516,408 522,541 529,160 536,355 542,700 548,535 555,680 561,712 568,643 575,668 581,711 594,664 601,680 607,704 614,745 626,684 633,722 639,752 645,748 652,664 658,706 665,752 671,735 678,685 684,748 691,741 697,746 704,748 710,706 723,752 742,748 748,709 755,738 768,738 775,752 781,740 787,669 794,718 800,710 807,714 813,748 819,538 825,690 832,561 839,582 845,510 851,629 858,634 864,490 871,570 877,605 884,672 890,732 896,684 903,710 909,656 916,647 922,656 929,550 935,508 942,635 948,546 955,703 961,708 968,728 974,743 981,675 987,693 993,722 1000,667 1006,708 1013,718"],
    [990, "29,724 42,720 48,568 55,725 61,730 74,730 81,480 87,732 94,745 100,728 107,738 113,736 120,726 132,736 145,720 151,570 158,456 164,620 171,700 177,752 184,720 190,740 197,709 204,715 210,748 216,444 222,720 229,685 235,708 242,752 255,706 274,706 281,716 287,754 293,680 325,752 332,710 397,661 403,695 409,687 416,715 422,724 429,750 435,705 442,665 448,580 454,752 461,725 467,746 474,742 487,735 493,682 499,738 506,651 513,640 519,700 526,752 532,700 538,717 551,454 557,660 564,688 571,612 577,722 584,692 590,678 596,752 603,618 609,708 615,655 622,640 628,695 635,708 642,645 648,712 655,716 661,738 668,725 674,688 680,727 687,752 693,724 700,747 706,740 718,735 725,680 732,680 738,748 744,712 751,722 757,735 764,744 771,740 777,534 783,590 790,732 796,710 803,738 809,744 816,714 822,738 828,752 835,711 841,745 848,750 860,745 873,748 893,735 911,723 937,720 944,688 951,745 957,750"],
    [1980, "0,753 25,745 37,700 44,548 50,492 57,530 70,658 77,520 83,565 90,505 96,540 102,475 109,470 116,526 122,416 128,455 135,402 141,480 148,415 154,294 160,340 167,390 173,435 180,425 187,445 193,505 199,402 206,445 212,495 219,512 225,480 232,460 238,373 245,462 251,466 258,430 264,498 270,510 277,540 283,488 290,522 296,525 302,550 309,472 316,570 322,545 328,594 335,444 341,602 348,608 354,598 361,590 367,570 374,638 380,634 387,562 393,578 399,475 405,472 412,560 419,650 425,565 432,363 438,645 445,700 451,748 458,722 464,712 471,735 483,748 490,738 496,685 503,661 509,748 516,748 522,715 529,748 535,748 548,688 554,742 561,685 567,680 574,725 580,748 632,728 638,705 645,705 651,742 657,652 663,650 670,378 676,455 683,712 690,580 696,484 702,508 716,554 722,462 728,530 735,550 741,578 747,486 754,486 760,465 767,478 773,400 780,393 786,306 793,430 799,390 805,352 812,253 818,310 825,378 831,563 838,470 844,378 850,547 857,541 870,541 877,530 883,530 889,450 896,548 902,565 909,532 915,550 922,520 928,540 935,450 941,360 948,568 954,520 960,478 967,540 973,594 980,515 986,562 992,508 999,578"]
  ] },
  { color: "#4dd0e1", blocks: [
    [0, "374,548 381,443 394,490 400,515 407,465 426,472 433,485 439,500 446,535 452,505 458,530 465,390 471,510 478,357 484,368 491,420 497,492 504,488 510,488 516,465 522,510 529,620 536,604 542,680 548,627 555,725 561,718 568,657 575,720 581,725 587,716 594,730 600,722 607,733 613,722 620,677 626,750 633,746 646,752 652,728 658,745 665,751 768,743 800,750 807,742 813,740 819,725 826,736 832,600 839,380 845,223 852,298 858,700 865,672 871,583 877,708 890,716 896,660 903,710 909,655 916,735 922,708 929,650 935,700 942,690 948,641 955,698 961,740 974,715 981,710 987,724 993,680 1000,607 1006,640 1013,670"],
    [990, "29,645 35,746 42,745 48,725 55,742 61,748 68,742 74,725 81,755 87,745 94,738 100,722 107,716 113,695 120,748 126,735 132,720 139,702 145,716 151,648 158,738 164,734 177,740 184,738 190,718 197,716 204,745 216,745 222,680 229,715 235,748 242,700 248,658 255,748 280,750 325,757 370,755 397,739 416,745 440,745 448,738 461,750 474,745 487,756 499,750 506,755 513,745 519,562 526,745 532,715 538,698 545,738 551,745 557,748 564,733 571,750 577,755 584,748 603,745 609,730 615,686 622,690 628,735 635,745 642,718 648,703 655,748 661,742 668,748 680,732 693,748 706,740 725,745 738,752 744,745 751,757 757,745 790,734 796,752 803,745 816,745 822,755 828,742 841,744 848,755 873,745 886,756 911,745 925,756 949,745 970,757"],
    [1980, "38,757 44,720 50,680 57,745 64,732 70,740 77,637 83,705 90,728 96,700 102,672 109,705 116,540 122,510 128,455 135,515 141,498 148,375 154,435 160,328 167,380 173,420 180,475 187,492 193,570 199,502 206,528 219,520 225,512 232,483 238,487 245,482 251,492 258,415 264,430 270,465 277,424 283,430 290,475 296,502 302,505 309,486 316,528 322,525 328,545 335,505 341,558 348,430 354,355 361,410 367,455 374,480 380,496 387,468 393,497 399,475 405,618 412,590 419,685 425,705 432,684 438,695 445,705 451,730 458,740 464,730 471,745 477,706 483,755 490,754 496,742 503,742 509,755 515,496 522,700 529,755 542,752 554,742 567,748 590,753 632,750 645,745 657,748 663,728 670,697 676,732 683,738 690,683 696,708 702,735 709,720 716,672 722,545 728,450 735,465 741,352 754,350 760,382 767,380 773,415 780,435 786,380 792,228 799,470 805,383 812,482 818,430 825,355 831,295 838,395 844,485 850,468 857,512 863,462 870,472 877,528 883,465 889,430 896,410 902,523 909,450 915,462 922,490 928,523 935,512 941,500 948,530 954,542 960,478 967,538 973,490 980,458 986,475 992,505 999,623"]
  ] },
  { color: "#ff780a", blocks: [
    [0, "510,755 530,757 935,756 987,753 993,756 1000,745 1006,728 1020,750"],
    [990, "32,756 42,751"],
    [1980, "98,730 122,710 135,753 700,756 720,757 760,751 860,747 999,738"]
  ] }
];

const group = document.getElementById("series");
const make = (cls, d, attr, color) => {
  const el = document.createElementNS("http://www.w3.org/2000/svg", "path");
  el.setAttribute("class", cls);
  el.setAttribute("d", d);
  el.setAttribute(attr, color);
  group.appendChild(el);
};
for (const s of series) {
  const pts = s.blocks.flatMap(([dx, text]) =>
    text.split(" ").map(p => { const [x, y] = p.split(",").map(Number); return [x + dx, y]; }));
  const line = "M" + pts.map(p => p.join(" ")).join("L");
  make("area", `${line}L${pts[pts.length - 1][0]} ${BASE}L${pts[0][0]} ${BASE}Z`, "fill", s.color);
  make("line", line, "stroke", s.color);
}
```
